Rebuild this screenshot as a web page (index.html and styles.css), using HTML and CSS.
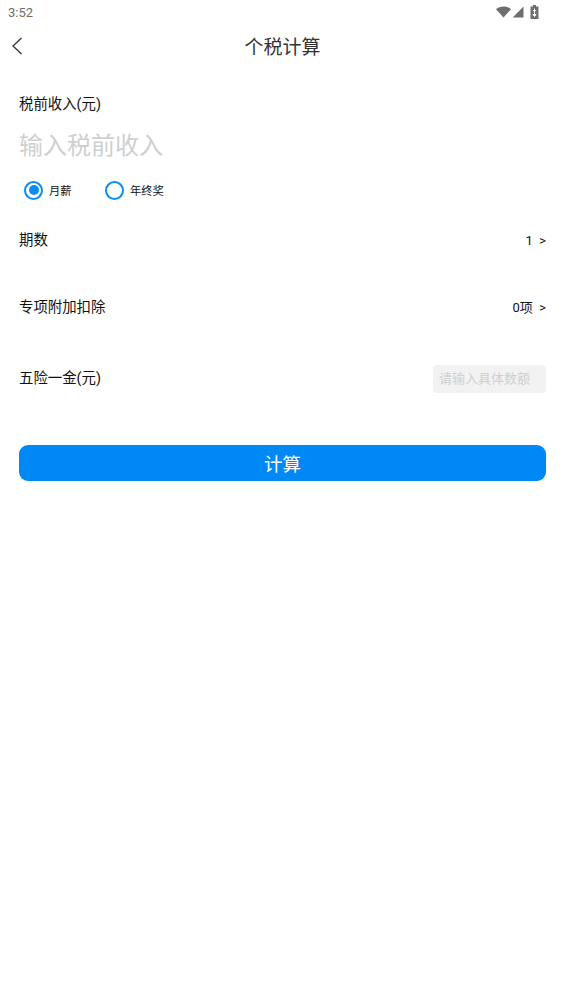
FILE: index.html
```html
<!DOCTYPE html>
<html lang="zh-CN">

<head>
    <meta charset="UTF-8">
    <meta name="viewport" content="width=device-width, initial-scale=1.0">
    <title>个税计算</title>
    <link rel="stylesheet" href="styles.css">
</head>

<body>
    <div class="status-bar">
        <span class="time">3:52</span>
        <div class="status-icons">
            <svg width="15" height="12" viewBox="0 0 15 12"><path d="M0 3.2C2 1.3 4.6.4 7.5.4s5.500.9 7.500 2.800L7.500 11.600z" fill="#6e6e6e"/></svg>
            <svg class="signal" width="12" height="12" viewBox="0 0 12 12"><path d="M11.500.6v10.800H.7z" fill="#6e6e6e"/></svg>
            <svg width="9" height="14" viewBox="0 0 9 14"><path d="M3 0h3v1.500h2.500V14H.5V1.500H3z" fill="#6e6e6e"/><path d="M4.500 3.500v8M3 5.500h3M4.500 11.500L3 9.500h3z" stroke="#fff" fill="none"/></svg>
        </div>
    </div>

    <header class="title-bar">
        <svg class="back" width="12" height="20" viewBox="0 0 12 20"><path d="M10.500 2L2 10l8.500 8" fill="none" stroke="#333" stroke-width="1.300"/></svg>
        <h1>个税计算</h1>
    </header>

    <main class="form">
        <div class="label">税前收入(元)</div>
        <div class="income-input">输入税前收入</div>

        <div class="radios">
            <label class="radio radio-month"><span class="dot checked"></span><span class="radio-text">月薪</span></label>
            <label class="radio"><span class="dot"></span><span class="radio-text">年终奖</span></label>
        </div>

        <div class="row row-period">
            <span>期数</span>
            <span class="value">1 &nbsp;&gt;</span>
        </div>
        <div class="row row-extra">
            <span>专项附加扣除</span>
            <span class="value">0项 &nbsp;&gt;</span>
        </div>
        <div class="row row-fund">
            <span>五险一金(元)</span>
            <div class="fund-input">请输入具体数额</div>
        </div>

        <button class="submit">计算</button>
    </main>
</body>

</html>
```

FILE: styles.css
```css
* {
    box-sizing: border-box;
    font-family: Roboto, "Noto Sans CJK SC", sans-serif;
}

body {
    margin: 0;
    padding: 0;
    background: #fff;
    color: #111;
}

.status-bar {
    display: flex;
    justify-content: space-between;
    align-items: center;
    height: 24px;
    padding: 0 26px 0 8px;
}

.time {
    font-size: 13px;
    color: #6e6e6e;
}

.status-icons {
    display: flex;
    align-items: center;
    gap: 1px;
}

.signal {
    margin-right: 5px;
}

.title-bar {
    position: relative;
    display: flex;
    justify-content: center;
    align-items: center;
    height: 44px;
    padding-bottom: 2px;
}

.title-bar h1 {
    margin: 0;
    font-size: 19px;
    font-weight: 400;
    color: #333;
}

.back {
    position: absolute;
    left: 11px;
    top: 12px;
}

.form {
    padding: 0 19px;
}

.label {
    margin-top: 26px;
    font-size: 14.400px;
    line-height: 22px;
}

.income-input {
    margin-top: 12px;
    font-size: 24px;
    line-height: 36px;
    color: #cfcfcf;
}

.radios {
    display: flex;
    margin-top: 16px;
    padding-left: 5px;
}

.radio {
    display: flex;
    align-items: center;
    gap: 6px;
    height: 20px;
    font-size: 11.300px;
    line-height: 20px;
}

.radio-text {
    padding-top: 3px;
}

.radio-month {
    width: 81px;
}

.dot {
    display: flex;
    justify-content: center;
    align-items: center;
    width: 19px;
    height: 19px;
    border: 2px solid #0a8cf5;
    border-radius: 50%;
}

.dot.checked::after {
    content: "";
    width: 10px;
    height: 10px;
    border-radius: 50%;
    background: #0a8cf5;
}

.row {
    display: flex;
    justify-content: space-between;
    align-items: center;
    font-size: 14.400px;
    line-height: 22px;
}

.row-period {
    margin-top: 30px;
}

.row-extra {
    margin-top: 45px;
}

.row-fund {
    margin-top: 46px;
}

.value {
    font-size: 13px;
}

.fund-input {
    width: 113px;
    height: 28px;
    padding-left: 6px;
    border-radius: 4px;
    background: #f2f2f2;
    font-size: 13px;
    line-height: 28px;
    color: #cfcfcf;
}

.submit {
    display: block;
    width: 100%;
    height: 36px;
    margin-top: 52px;
    padding: 0;
    border: none;
    border-radius: 9px;
    background: #0088f5;
    color: #fff;
    font-size: 18.500px;
}
```
